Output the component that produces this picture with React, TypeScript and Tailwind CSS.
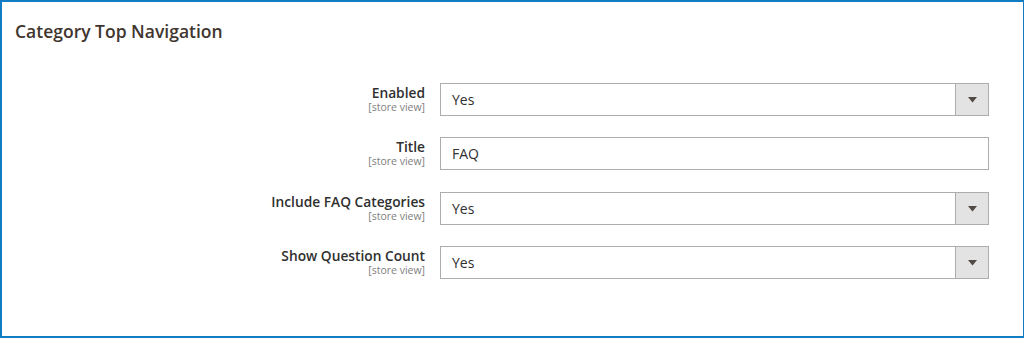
import React from "react";

const font = { fontFamily: '"Open Sans", "Liberation Sans", sans-serif' };

function Label({ title }: { title: string }) {
  return (
    <div className="w-[423px] shrink-0 text-right pt-[1px]">
      <div className="text-[13.75px] leading-[18px] font-semibold text-[#303030]">{title}</div>
      <div className="text-[10.5px] leading-[12px] text-[#808080] -mt-[1px]">[store view]</div>
    </div>
  );
}

function SelectBox({ value }: { value: string }) {
  return (
    <div className="ml-[15px] w-[549px] h-[33px] border border-[#adadad] flex bg-white">
      <div className="flex-1 flex items-center pl-[11px] text-[14px] text-[#303030]">{value}</div>
      <div className="w-[33px] h-full bg-[#e3e3e3] border-l border-[#adadad] flex items-center justify-center">
        <svg width="9" height="6" viewBox="0 0 9 6">
          <polygon points="0,0 9,0 4.5,5.5" fill="#514943" />
        </svg>
      </div>
    </div>
  );
}

function TextBox({ value }: { value: string }) {
  return (
    <div className="ml-[15px] w-[549px] h-[33px] border border-[#adadad] flex items-center pl-[11px] text-[14px] text-[#303030] bg-white">
      {value}
    </div>
  );
}

export default function App() {
  return (
    <div style={font} className="w-[1024px] h-[338px] bg-white border-2 border-[#117cc4] border-r-[1px] box-border overflow-hidden">
      <div className="pl-[13px] pt-[18px] text-[17.5px] leading-[23px] font-semibold text-[#41362f]">
        Category Top Navigation
      </div>
      <div className="mt-[40px] flex flex-col">
        <div className="flex">
          <Label title="Enabled" />
          <SelectBox value="Yes" />
        </div>
        <div className="flex mt-[21px]">
          <Label title="Title" />
          <TextBox value="FAQ" />
        </div>
        <div className="flex mt-[22px]">
          <Label title="Include FAQ Categories" />
          <SelectBox value="Yes" />
        </div>
        <div className="flex mt-[21px]">
          <Label title="Show Question Count" />
          <SelectBox value="Yes" />
        </div>
      </div>
    </div>
  );
}
